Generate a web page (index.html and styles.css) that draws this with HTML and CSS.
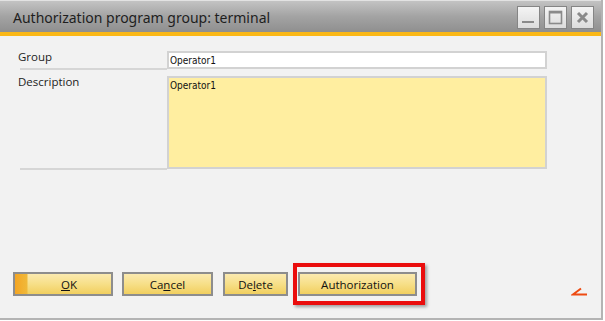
FILE: index.html
```html
<!DOCTYPE html>
<html>
<head>
<meta charset="utf-8">
<link rel="stylesheet" href="styles.css">
</head>
<body>
<div class="window">
  <div class="titlebar">
    <span class="title">Authorization program group: terminal</span>
    <div class="wbtns">
      <span class="wbtn"><svg width="21" height="21" viewBox="0 0 21 21"><rect x="4" y="14" width="12" height="2" fill="#8a8a8a"/></svg></span>
      <span class="wbtn"><svg width="21" height="21" viewBox="0 0 21 21"><rect x="4.5" y="4.5" width="12" height="12" fill="none" stroke="#8a8a8a" stroke-width="1.6"/><rect x="4" y="4" width="13" height="2.5" fill="#8a8a8a"/></svg></span>
      <span class="wbtn"><svg width="21" height="21" viewBox="0 0 21 21"><path d="M6 6 L15 15 M15 6 L6 15" stroke="#8a8a8a" stroke-width="3"/></svg></span>
    </div>
  </div>
  <div class="stripe"></div>
  <div class="content">
    <div class="form">
      <div class="label">Group</div>
      <div class="field input">Operator1</div>
      <div class="label">Description</div>
      <div class="field textarea">Operator1</div>
    </div>
    <div class="actions">
      <button class="btn ok"><u>O</u>K</button>
      <button class="btn cancel">Ca<u>n</u>cel</button>
      <button class="btn delete">De<u>l</u>ete</button>
      <span class="highlight"><button class="btn auth">Authorization</button></span>
      <span class="spacer"></span>
      <svg class="mark" width="18" height="10" viewBox="0 0 18 10"><path d="M10 1.5 L2 7.5 L16 7.5" fill="none" stroke="#ee4b12" stroke-width="2"/></svg>
    </div>
  </div>
</div>
</body>
</html>
```

FILE: styles.css
```css
html, body {
  margin: 0;
  padding: 0;
  background: #ffffff;
}
.window {
  width: 601px;
  height: 318px;
  border-right: 2px solid #b4b4b4;
  border-bottom: 2px solid #b4b4b4;
  background: #f2f2f2;
  display: flex;
  flex-direction: column;
}
.titlebar {
  height: 32px;
  box-sizing: border-box;
  border-top: 1px solid #e2e2e2;
  background: linear-gradient(#c3c3c3, #a3a3a3 50%, #8f8f8f);
  display: flex;
  align-items: center;
  padding-left: 13px;
  padding-right: 7px;
}
.title {
  font-family: "Noto Sans", sans-serif;
  font-size: 14px;
  color: #1e1e1e;
  flex: 1;
  margin-top: 1px;
}
.wbtns {
  display: flex;
  gap: 4px;
  margin-top: 1px;
}
.wbtn {
  width: 21px;
  height: 21px;
  border: 1px solid #858585;
  background: linear-gradient(#f4f4f4, #dcdcdc);
  display: block;
}
.wbtn svg { display: block; }
.stripe {
  height: 4px;
  background: #fbb817;
}
.content {
  flex: 1;
  display: flex;
  flex-direction: column;
  padding: 15px 0 0 18px;
}
.form {
  display: grid;
  grid-template-columns: 149px 380px;
  grid-template-rows: 18px 93px;
  row-gap: 7px;
}
.label {
  font-family: "Open Sans", sans-serif;
  font-size: 11.5px;
  color: #222;
  border-bottom: 2px solid #d6d6d6;
  line-height: 11px;
  margin-bottom: -1px;
  margin-left: 2px;
  text-indent: -2px;
}
.field {
  box-sizing: border-box;
  border: 2px solid #d2d2d2;
  font-family: "DejaVu Sans Condensed", "DejaVu Sans", sans-serif;
  font-size: 10px;
  color: #111;
  padding: 2px 0 0 1px;
  line-height: 12px;
}
.input { background: #ffffff; }
.textarea { background: #ffeea0; }
.actions {
  margin-top: 94px;
  margin-left: -5px;
  display: flex;
  align-items: center;
  padding-right: 12px;
}
.btn {
  box-sizing: border-box;
  height: 24px;
  border: 2px solid #8d8d8d;
  background: linear-gradient(#fbeab0, #f7df88 50%, #f1cf5f);
  font-family: "Open Sans", sans-serif;
  font-size: 11.5px;
  color: #111;
  padding: 0;
  margin: 0;
}
.ok {
  width: 100px;
  margin-right: 9px;
  background: linear-gradient(90deg, #f4a523 0, #f0b93a 12px, transparent 13px), linear-gradient(#fbeab0, #f7df88 50%, #f1cf5f);
  padding-left: 12px;
}
.cancel { width: 91px; margin-right: 10px; }
.delete { width: 65px; margin-right: 5px; }
.highlight {
  display: block;
  border: 4px solid #ea0d0d;
  padding: 5px 4px 5px 1px;
  box-shadow: 2px 2px 3px rgba(0,0,0,0.35);
}
.auth { width: 119px; display: block; }
.spacer { flex: 1; }
.mark { display: block; margin-top: 16px; }
```
